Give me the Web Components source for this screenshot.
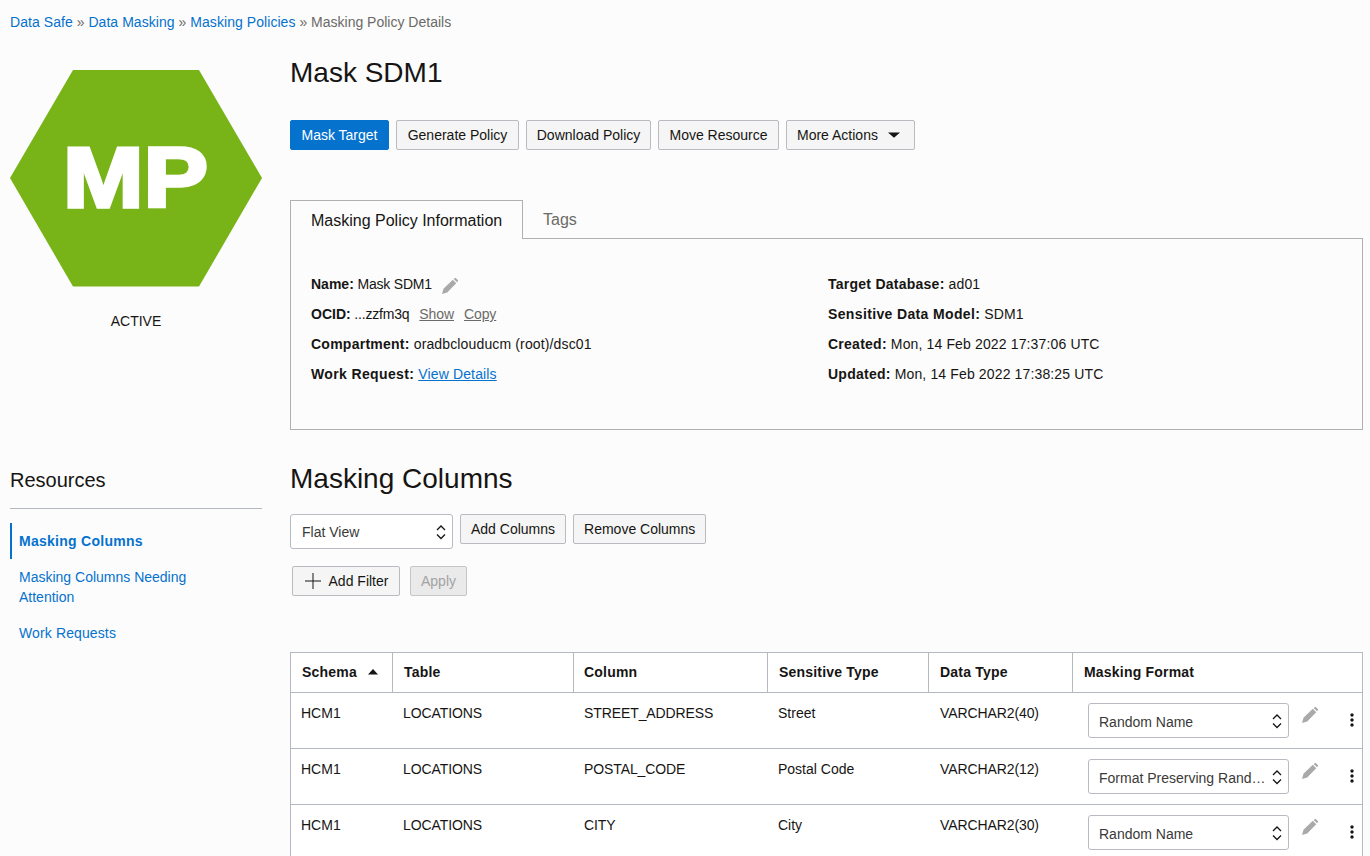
<!DOCTYPE html>
<html lang="en"><head><meta charset="utf-8"><title>Masking Policy Details</title>
<style>
html,body{margin:0;height:856px;overflow:hidden;background:#fcfcfc}
body{font:14px/20px "Liberation Sans",Arial,sans-serif;color:#161513}
</style></head><body>
<ds-page></ds-page>
<script>
const PENCIL='<path d="M0 16L1.500 10.800 10.800 1.800 14.200 5.200 5.200 14.500z"/><path d="M11.700 1L13 0Q13.500-.2 14 .3L15.800 2.100Q16.200 2.600 16 3L15 4.300z"/>';
function def(name,css,html){
  customElements.define(name,class extends HTMLElement{
    constructor(){super();this.attachShadow({mode:'open'});}
    connectedCallback(){ if(!this._d){this._d=1;this.shadowRoot.innerHTML='<style>'+css+'</style>'+(typeof html==='function'?html(this):html);} }
  });
}
def('ds-crumbs',`:host{display:flex;align-items:center;height:20px;color:#6b6a67;white-space:pre}
a{color:#0572ce;text-decoration:none;letter-spacing:.06px}`,
`<span><a>Data Safe</a> » <a>Data Masking</a> » <a>Masking Policies</a> » Masking Policy Details</span>`);

def('ds-hex',`:host{display:block;width:252px}
svg{display:block}
p{margin:23px 0 0;text-align:center;line-height:20px}`,
`<svg width="252" height="218" viewBox="0 0 252 218"><polygon points="0,108 63,0 189,0 252,108 189,216.500 63,216.500" fill="#78b317"/>
<text x="53" y="137.250" fill="#fff" stroke="#fff" stroke-width="3.500" font-family="Liberation Sans" font-weight="700" font-size="85" textLength="145" lengthAdjust="spacingAndGlyphs">MP</text></svg><p>ACTIVE</p>`);

def('ds-btn',`:host{display:inline-flex;align-items:center;justify-content:center;box-sizing:border-box;height:30px;padding:0 10px;border:1px solid #b8bbc0;border-radius:2px;background:#f5f5f5;color:#161513;white-space:nowrap}
:host([primary]){background:#0572ce;border-color:#0572ce;color:#fff}
:host([disabled]){background:#eaeaea;border-color:#c4c6c9;color:#a3a3a3}`,`<slot></slot>`);

def('ds-select',`:host{display:flex;align-items:center;justify-content:space-between;box-sizing:border-box;height:35px;padding:0 5px 0 11px;border:1px solid #b8bbc4;border-radius:3px;background:#fff;color:#3a3a38;white-space:nowrap;overflow:hidden}
span{padding-top:var(--ts,0)}
svg{flex:none;display:block}`,
`<span><slot></slot></span><svg width="12" height="18" viewBox="0 0 12 18" fill="none" stroke="#161513" stroke-width="1.300"><path d="M2 7l4-4 4 4M2 11.500l4 4 4-4"/></svg>`);

def('ds-tabs',`:host{display:flex;height:39px;box-sizing:border-box}
.on{box-sizing:border-box;height:39px;width:233px;padding:10px 0 0 20px;border:1px solid #aeb0b3;border-bottom:0;background:#fcfcfc;font-size:16px;color:#161513;line-height:20px}
.off{flex:1;border-bottom:1px solid #aeb0b3;padding:10px 0 0 20px;font-size:16px;line-height:20px;color:#6b6a67}`,
`<div class="on">Masking Policy Information</div><div class="off">Tags</div>`);

def('ds-info',`:host{display:block;box-sizing:border-box;height:191px;border:1px solid #aeb0b3;border-top:0;padding:30px 0 0 20px}
.g{display:grid;grid-template-columns:517px 1fr;grid-auto-rows:30px}
.c{display:flex;align-items:center;height:30px;white-space:pre;letter-spacing:.14px}
b{font-weight:700;letter-spacing:.25px}
.x b{letter-spacing:.36px}
.n{letter-spacing:-.2px}
.n b{letter-spacing:0}
a{color:#0572ce;text-decoration:underline}
.m{color:#6b6a67;text-decoration:underline;margin-left:10px;letter-spacing:-.1px}
svg{fill:#a9a9a9;margin:4px 0 0 10px;display:block}`,
`<div class="g">
<div class="c n"><span><b>Name:</b> Mask SDM1</span><svg width="16" height="16" viewBox="0 0 16 16">${PENCIL}</svg></div><div class="c"><span><b>Target Database:</b> ad01</span></div>
<div class="c n"><span><b>OCID:</b> ...zzfm3q</span><span class="m">Show</span><span class="m">Copy</span></div><div class="c x"><span><b>Sensitive Data Model:</b> SDM1</span></div>
<div class="c"><span><b>Compartment:</b> oradbclouducm (root)/dsc01</span></div><div class="c"><span><b>Created:</b> Mon, 14 Feb 2022 17:37:06 UTC</span></div>
<div class="c x"><span><b>Work Request:</b> <a>View Details</a></span></div><div class="c"><span><b>Updated:</b> Mon, 14 Feb 2022 17:38:25 UTC</span></div>
</div>`);

def('ds-resources',`:host{display:block;width:252px}
h2{margin:0;font-size:20px;font-weight:400;line-height:28px;padding-bottom:14px;border-bottom:1px solid #b4b8c0}
nav{margin-top:14px;color:#0572ce;display:flex;flex-direction:column}
div{padding:8px 0 8px 9px;line-height:20px}
div.on{font-weight:700;letter-spacing:.27px;border-left:2px solid #0572ce;padding-left:7px}
div.w{letter-spacing:.12px}
`,`<h2>Resources</h2><nav><div class="on">Masking Columns</div><div>Masking Columns Needing<br>Attention</div><div class="w">Work Requests</div></nav>`);

const COLS='101px 181px 194px 161px 144px 1fr';
def('ds-head',`:host{display:grid;grid-template-columns:${COLS};height:40px;box-sizing:border-box;border-bottom:1px solid #b4b8c0;background:#fff;font-weight:700;letter-spacing:.2px}
div{display:flex;align-items:center;padding:0 0 2px 11px;border-left:1px solid #b4b8c0}
div:first-of-type{border-left:0}
div:nth-of-type(3){padding-left:10px}
svg{margin-left:11px}`,
`<div>Schema<svg width="10" height="6" viewBox="0 0 10 6"><path d="M5 0l5 5.500H0z" fill="#161513"/></svg></div><div>Table</div><div>Column</div><div>Sensitive Type</div><div>Data Type</div><div>Masking Format</div>`);

def('ds-row',`:host{display:grid;grid-template-columns:${COLS};height:56px;box-sizing:border-box;border-bottom:1px solid #b4b8c0;background:#fff}
.t{padding:10px 0 0 11px}
.t.u{letter-spacing:-.1px}
.t.f{padding-left:10px}
.t.k{padding-left:12px}
.a{display:flex;align-items:flex-start;padding:10px 0 0 16px}
ds-select{width:201px;flex:none;padding-left:10px;--ts:2px}
.p{flex:none;fill:#a9a9a9;margin:4px 0 0 13px;display:block}
.d{flex:none;margin:10px 0 0 32px;display:block}`,
h=>`<div class="t f">${h.getAttribute('s')}</div><div class="t u">${h.getAttribute('tb')}</div><div class="t u">${h.getAttribute('c')}</div><div class="t">${h.getAttribute('st')}</div><div class="t k u">${h.getAttribute('dt')}</div>
<div class="a"><ds-select>${h.getAttribute('f')}</ds-select><svg class="p" width="16" height="16" viewBox="0 0 16 16">${PENCIL}</svg><svg class="d" width="4" height="14" viewBox="0 0 4 14" fill="#161513"><circle cx="2" cy="2" r="1.700"/><circle cx="2" cy="7" r="1.700"/><circle cx="2" cy="12" r="1.700"/></svg></div>`);

def('ds-table',`:host{display:block;border:1px solid #b4b8c0;border-bottom:0}`,`<slot></slot>`);

def('ds-page',`:host{display:block;padding:12px 7px 0 10px;width:1353px}
.top{display:grid;grid-template-columns:252px 1fr;column-gap:28px;margin-top:20px}
ds-hex{margin-top:18px}
h1{margin:1px 0 0;font-size:28px;font-weight:400;line-height:40px}
.b{display:flex;gap:7px;margin-top:27px}
ds-tabs{margin-top:50px}
.bot{display:grid;grid-template-columns:252px 1fr;column-gap:28px;margin-top:29px}
h2{margin:0;font-size:28px;font-weight:400;line-height:40px}
.f{display:flex;gap:7px;align-items:flex-start;margin-top:15px}
.f ds-select{width:163px}
.g{display:flex;margin:17px 0 0 2px;gap:10px}
.plus{display:block;margin-right:7px}
ds-table{margin-top:56px}
ds-resources{margin-top:7px}
`,`<ds-crumbs></ds-crumbs>
<div class="top"><ds-hex></ds-hex><div>
<h1>Mask SDM1</h1>
<div class="b"><ds-btn primary style="width:99px">Mask Target</ds-btn><ds-btn style="width:123px">Generate Policy</ds-btn><ds-btn style="width:125px">Download Policy</ds-btn><ds-btn style="width:121px">Move Resource</ds-btn><ds-btn style="width:129px;justify-content:flex-start">More Actions<svg style="margin-left:10px" width="12" height="6" viewBox="0 0 12 6"><path d="M0 .5h12L6 5.800z" fill="#161513"/></svg></ds-btn></div>
<ds-tabs></ds-tabs><ds-info></ds-info></div></div>
<div class="bot"><ds-resources></ds-resources><div>
<h2>Masking Columns</h2>
<div class="f"><ds-select>Flat View</ds-select><ds-btn>Add Columns</ds-btn><ds-btn>Remove Columns</ds-btn></div>
<div class="g"><ds-btn style="width:108px"><svg class="plus" width="18" height="18" viewBox="0 0 18 18" stroke="#161513" fill="none"><path d="M9 1v16M1 9h16"/></svg>Add Filter</ds-btn><ds-btn disabled>Apply</ds-btn></div>
<ds-table>
<ds-head></ds-head>
<ds-row s="HCM1" tb="LOCATIONS" c="STREET_ADDRESS" st="Street" dt="VARCHAR2(40)" f="Random Name"></ds-row>
<ds-row s="HCM1" tb="LOCATIONS" c="POSTAL_CODE" st="Postal Code" dt="VARCHAR2(12)" f="Format Preserving Rand…"></ds-row>
<ds-row s="HCM1" tb="LOCATIONS" c="CITY" st="City" dt="VARCHAR2(30)" f="Random Name"></ds-row>
</ds-table></div></div>`);
</script>
</body></html>
